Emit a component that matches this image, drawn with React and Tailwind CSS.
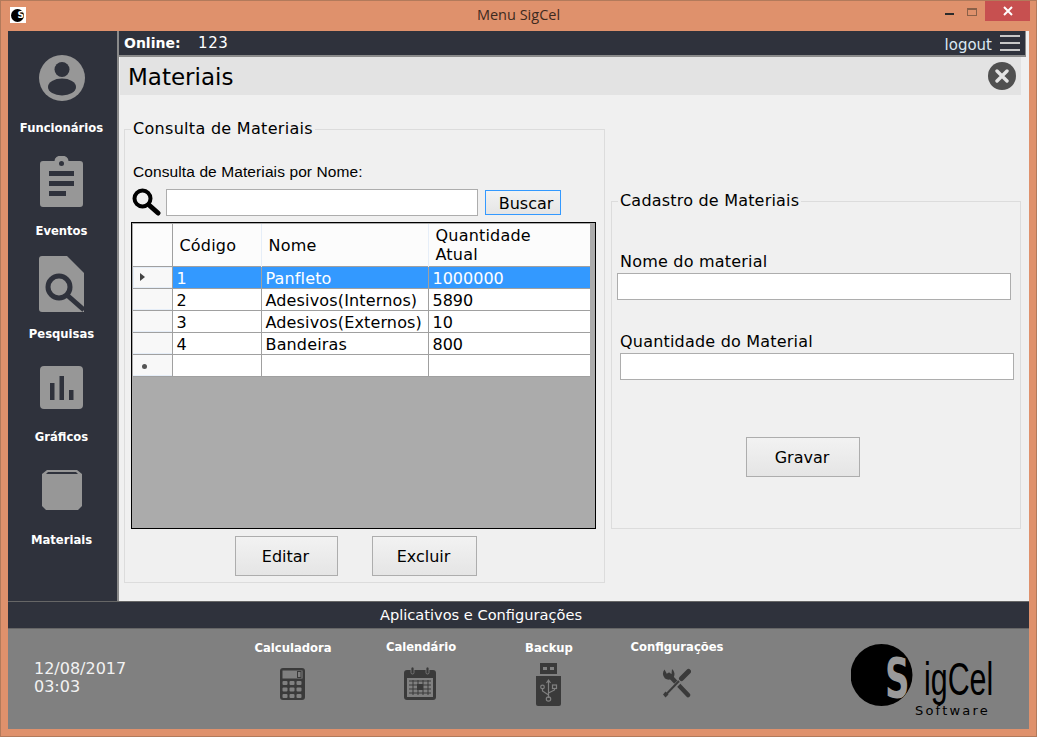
// App.jsx - Menu SigCel, tela de materiais
const VERDANA = "[font-family:'DejaVu_Sans',sans-serif]";

function PersonIcon() {
  return (
    <svg width="46" height="46" viewBox="0 0 46 46">
      <circle cx="23" cy="23" r="23" fill="#979797" />
      <circle cx="23" cy="14.5" r="7.5" fill="#2f323c" />
      <ellipse cx="23" cy="32" rx="14" ry="8.5" fill="#2f323c" />
    </svg>
  );
}

function ClipboardIcon() {
  return (
    <svg width="43" height="51" viewBox="0 0 43 51">
      <path d="M3 5h11.5a7 5.5 0 0 1 14 0H40a3 3 0 0 1 3 3v40a3 3 0 0 1-3 3H3a3 3 0 0 1-3-3V8a3 3 0 0 1 3-3z" fill="#979797" />
      <circle cx="21.5" cy="7.5" r="2.5" fill="#2f323c" />
      <rect x="9" y="15" width="25" height="5" fill="#2f323c" />
      <rect x="9" y="25" width="25" height="5" fill="#2f323c" />
      <rect x="9" y="35" width="17" height="5" fill="#2f323c" />
    </svg>
  );
}

function FileSearchIcon() {
  return (
    <svg width="45" height="56" viewBox="0 0 45 56">
      <path d="M3 0h25l17 17v39H3a3 3 0 0 1-3-3V3a3 3 0 0 1 3-3z" fill="#979797" />
      <circle cx="20" cy="31" r="11" fill="none" stroke="#2f323c" strokeWidth="5" />
      <path d="M28 39l17 15" stroke="#2f323c" strokeWidth="5" />
    </svg>
  );
}

function ChartIcon() {
  return (
    <svg width="43" height="43" viewBox="0 0 43 43">
      <rect width="43" height="43" rx="4" fill="#979797" />
      <rect x="10" y="17" width="4.5" height="17" fill="#2f323c" />
      <rect x="19.5" y="10" width="4.5" height="24" fill="#2f323c" />
      <rect x="29" y="24" width="4.5" height="10" fill="#2f323c" />
    </svg>
  );
}

function BoxIcon() {
  return (
    <svg width="40" height="40" viewBox="0 0 40 40">
      <path d="M5 0h30l5 4v32l-4 4H4l-4-4V4z" fill="#979797" />
      <path d="M4 4l2-2h28l2 2z" fill="#2f323c" />
    </svg>
  );
}

function CalculatorIcon() {
  const keys = [];
  for (let r = 0; r < 3; r++) {
    for (let c = 0; c < 3; c++) {
      keys.push(<rect key={`${r}-${c}`} x={2.5 + c * 7} y={13 + r * 6.5} width="5" height="4" rx="1" fill="#808080" />);
    }
  }
  return (
    <svg width="25" height="32" viewBox="0 0 25 32">
      <rect width="25" height="32" rx="3" fill="#3a3a3a" />
      <rect x="2.5" y="2.5" width="20" height="8" fill="#808080" />
      <rect x="17.5" y="3.5" width="3.5" height="6" fill="none" stroke="#3a3a3a" />
      {keys}
    </svg>
  );
}

function CalendarIcon() {
  return (
    <svg width="32" height="33" viewBox="0 0 32 33">
      <rect y="3" width="32" height="30" rx="3" fill="#3a3a3a" />
      <rect x="7" y="0" width="3" height="7" rx="1.5" fill="#3a3a3a" stroke="#808080" strokeWidth="0.8" />
      <rect x="22" y="0" width="3" height="7" rx="1.5" fill="#3a3a3a" stroke="#808080" strokeWidth="0.8" />
      <rect x="3" y="11" width="26" height="19" fill="#808080" />
      <path d="M5 14h22M5 18h22M5 22h22M5 26h22M9 13v15M14 13v15M19 13v15M24 13v15" stroke="#3a3a3a" strokeWidth="1" />
      <rect x="13" y="17" width="6" height="6" fill="#3a3a3a" />
    </svg>
  );
}

function UsbIcon() {
  return (
    <svg width="25" height="43" viewBox="0 0 25 43">
      <rect x="4" y="0" width="17" height="11" fill="#3a3a3a" />
      <rect x="7" y="4" width="4" height="3" fill="#808080" />
      <rect x="14" y="4" width="4" height="3" fill="#808080" />
      <path d="M0 13h25v28a2 2 0 0 1-2 2H2a2 2 0 0 1-2-2z" fill="#3a3a3a" />
      <path d="M12.5 18v17M12.5 32l-6-4v-3M12.5 30l6-3v-2M10.5 20l2-3 2 3" fill="none" stroke="#808080" strokeWidth="1.2" />
      <circle cx="12.5" cy="36" r="2.2" fill="none" stroke="#808080" strokeWidth="1.2" />
      <circle cx="6.5" cy="24" r="1.8" fill="none" stroke="#808080" strokeWidth="1.2" />
      <rect x="16.5" y="22" width="4" height="3.5" fill="none" stroke="#808080" strokeWidth="1.2" />
    </svg>
  );
}

function ToolsIcon() {
  return (
    <svg width="29" height="30" viewBox="0 0 29 30">
      <path d="M7 7l19 20" stroke="#3a3a3a" strokeWidth="4.5" strokeLinecap="round" />
      <path d="M2.5 1.5a6.5 6.5 0 0 0 .5 9a6.5 6.5 0 0 0 8.5-1a6.5 6.5 0 0 0-1.5-8.5l-.5 5-4 1z" fill="#3a3a3a" />
      <path d="M17 14L3.5 27.5" stroke="#808080" strokeWidth="4.5" />
      <path d="M26.5 3.5l-7 7" stroke="#3a3a3a" strokeWidth="5" strokeLinecap="round" />
      <path d="M17 13L3.5 27" stroke="#3a3a3a" strokeWidth="2" />
      <path d="M3.5 23.5l3 3-3 3-2.5-3z" fill="#3a3a3a" />
    </svg>
  );
}

function Logo() {
  return (
    <svg width="150" height="78" viewBox="0 0 150 78">
      <defs>
        <clipPath id="logo-circle">
          <circle cx="30.5" cy="32" r="31" />
        </clipPath>
      </defs>
      <circle cx="30.5" cy="32" r="31" fill="#000" />
      <g transform="translate(34 54) scale(0.62 1)">
        <text fontFamily="'DejaVu Sans'" fontWeight="bold" fontSize="55" fill="#000">S</text>
      </g>
      <g clipPath="url(#logo-circle)">
        <g transform="translate(34 54) scale(0.62 1)">
          <text fontFamily="'DejaVu Sans'" fontWeight="bold" fontSize="55" fill="#9a9a9a">S</text>
        </g>
      </g>
      <g transform="translate(73 52) scale(0.66 1)">
        <text fontFamily="'Liberation Sans'" fontSize="46" fill="#000">igCel</text>
      </g>
      <text x="64" y="72" fontFamily="'DejaVu Sans'" fontSize="13" fill="#000" letterSpacing="2.2">Software</text>
    </svg>
  );
}

const MENU = [
  { label: 'Funcionários', icon: <PersonIcon /> },
  { label: 'Eventos', icon: <ClipboardIcon /> },
  { label: 'Pesquisas', icon: <FileSearchIcon /> },
  { label: 'Gráficos', icon: <ChartIcon /> },
  { label: 'Materiais', icon: <BoxIcon /> },
];

const APPS = [
  { label: 'Calculadora', icon: <CalculatorIcon />, top: 'pt-[12px]', gap: 'h-[57px]' },
  { label: 'Calendário', icon: <CalendarIcon />, top: 'pt-[11px]', gap: 'h-[58px]' },
  { label: 'Backup', icon: <UsbIcon />, top: 'pt-[12px]', gap: 'h-[59px]' },
  { label: 'Configurações', icon: <ToolsIcon />, top: 'pt-[11px]', gap: 'h-[58px]' },
];

const ROWS = [
  ['1', 'Panfleto', '1000000'],
  ['2', 'Adesivos(Internos)', '5890'],
  ['3', 'Adesivos(Externos)', '10'],
  ['4', 'Bandeiras', '800'],
  ['', '', ''],
];

function Sidebar() {
  return (
    <aside className="w-[111px] shrink-0 bg-[#2f323c] border-r-2 border-[#8a8a8a] pt-px pr-[2px]">
      {MENU.map((item) => (
        <div key={item.label} className="h-[103px] flex flex-col items-center">
          <div className="h-[86px] mt-[3px] flex items-center justify-center">{item.icon}</div>
          <span className="h-[12px] mt-px leading-[12px] text-[11.6px] font-bold text-white whitespace-nowrap">{item.label}</span>
        </div>
      ))}
    </aside>
  );
}

function Grid() {
  return (
    <div className="mt-[6px] ml-[6px] w-[465px] h-[307px] border border-black bg-[#ababab] pl-px pt-px">
      <table className="table-fixed border-collapse w-[457px] text-[16px] text-black">
        <colgroup>
          <col className="w-[39px]" />
          <col className="w-[89px]" />
          <col className="w-[167px]" />
          <col className="w-[162px]" />
        </colgroup>
        <thead>
          <tr className="h-[42px] bg-[#fcfcfc] border-b border-[#a0a0a0] leading-[19px] tracking-[0.2px]">
            <th className="border-r border-[#a0a0a0]" />
            <th className="border-r border-[#e6eef8] pl-[7px] pt-[1px] text-left font-normal">Código</th>
            <th className="border-r border-[#e6eef8] pl-[7px] pt-[1px] text-left font-normal">Nome</th>
            <th className="pl-[7px] pt-[1px] text-left font-normal">Quantidade<br />Atual</th>
          </tr>
        </thead>
        <tbody>
          {ROWS.map((row, i) => (
            <tr key={i} className={`h-[22px] border-b border-[#a0a0a0] ${i === 0 ? 'bg-[#3399ff] text-white' : 'bg-white'}`}>
              <td className="bg-[#f8f8f8] border-r border-[#a0a0a0] p-0">
                <div className={`h-[21px] flex items-center pl-[6px] border-b border-[#e6eef8] ${i === 0 ? 'border-l border-t' : ''}`}>
                  {i === 0 && <span className="w-0 h-0 border-y-[4px] border-y-transparent border-l-[5px] border-l-[#444]" />}
                  {i === 4 && <span className="ml-[3px] mt-[3px] w-[5px] h-[5px] rounded-full bg-[#555]" />}
                </div>
              </td>
              {row.map((cell, j) => (
                <td key={j} className={`pl-[4px] pt-[2px] pb-0 leading-[19px] whitespace-nowrap overflow-hidden ${j < 2 ? 'border-r border-[#a0a0a0]' : ''} ${j === 1 ? 'tracking-[0.15px]' : ''}`}>{cell}</td>
              ))}
            </tr>
          ))}
        </tbody>
      </table>
    </div>
  );
}

function PlainButton({ className, children }) {
  return (
    <button type="button" className={`border border-[#adadad] bg-gradient-to-b from-[#f2f2f2] to-[#e5e5e5] text-[16px] text-black pt-[2px] pr-[2px] ${className}`}>
      {children}
    </button>
  );
}

function Consulta() {
  return (
    <fieldset className="w-[481px] h-[464px] ml-[5px] border border-[#dcdcdc]">
      <legend className="ml-[6px] px-[2px] h-[20px] leading-[20px] text-[16px] tracking-[0.3px] text-black">Consulta de Materiais</legend>
      <p className="mt-[23px] ml-[8px] h-[20px] leading-[20px] text-[15.5px] tracking-[0.1px] text-black [font-family:'Liberation_Sans',sans-serif]">Consulta de Materiais por Nome:</p>
      <div className="mt-[6px] ml-[7px] flex items-center">
        <svg width="29" height="28" viewBox="0 0 29 28" className="shrink-0">
          <circle cx="10.5" cy="10.5" r="8" fill="none" stroke="#000" strokeWidth="4" />
          <path d="M17 17l9 8" stroke="#000" strokeWidth="5" strokeLinecap="round" />
        </svg>
        <input className="ml-[5px] w-[312px] h-[27px] bg-white border border-[#adadad] outline-none" />
        <PlainButton className="ml-[7px] w-[76px] h-[25px] !border-[#3399ff] leading-[21px] pl-[8px]">Buscar</PlainButton>
      </div>
      <Grid />
      <div className="mt-[7px] ml-[110px] flex gap-[34px]">
        <PlainButton className="w-[103px] h-[40px]">Editar</PlainButton>
        <PlainButton className="w-[105px] h-[40px]">Excluir</PlainButton>
      </div>
    </fieldset>
  );
}

function Cadastro() {
  return (
    <fieldset className="mt-[72px] ml-[6px] w-[410px] h-[338px] border border-[#dcdcdc]">
      <legend className="ml-[6px] px-[2px] h-[20px] leading-[20px] text-[16px] tracking-[0.2px] text-black">Cadastro de Materiais</legend>
      <label className="block mt-[41px] ml-[8px] h-[20px] leading-[20px] text-[16px] tracking-[0.2px] text-black">Nome do material</label>
      <input className="block mt-[1px] ml-[5px] w-[394px] h-[27px] bg-white border border-[#adadad] outline-none" />
      <label className="block mt-[32px] ml-[8px] h-[20px] leading-[20px] text-[16px] tracking-[0.2px] text-black">Quantidade do Material</label>
      <input className="block mt-[1px] ml-[8px] w-[394px] h-[27px] bg-white border border-[#adadad] outline-none" />
      <PlainButton className="block mt-[57px] ml-[134px] w-[114px] h-[40px]">Gravar</PlainButton>
    </fieldset>
  );
}

function Main() {
  return (
    <main className="flex-1 flex flex-col bg-[#f0f0f0] min-w-0">
      <div className="h-[26px] mr-[3px] flex items-center bg-[#2f323c] border-b-2 border-r border-[#8a8a8a] text-white">
        <span className="ml-[5px] w-[74px] text-[14px] font-bold">Online:</span>
        <span className="text-[15px] tracking-[0.6px]">123</span>
        <span className="ml-auto mt-[4px] text-[15px] text-[#dbe8f2]">logout</span>
        <span className="ml-[8px] mr-[5px] w-[20px] flex flex-col gap-[5px]">
          <span className="h-[2px] bg-[#c8c8c8]" />
          <span className="h-[2px] bg-[#c8c8c8]" />
          <span className="h-[2px] bg-[#c8c8c8]" />
        </span>
      </div>
      <div className="h-[38px] ml-px mr-[8px] flex items-center justify-between bg-[#e3e3e3] pl-[8px] pr-[5px]">
        <h1 className="pt-[2px] text-[23px] font-normal text-black">Materiais</h1>
        <span className="w-[28px] h-[28px] rounded-full bg-[#505050] flex items-center justify-center">
          <svg width="14" height="14" viewBox="0 0 14 14">
            <path d="M2 2l10 10M12 2L2 12" stroke="#e3e3e3" strokeWidth="3.4" strokeLinecap="round" />
          </svg>
        </span>
      </div>
      <div className="flex-1 flex items-start pt-[24px]">
        <Consulta />
        <Cadastro />
      </div>
    </main>
  );
}

function Footer() {
  return (
    <footer className="shrink-0">
      <div className="h-[28px] flex items-center justify-center pr-[75px] bg-[#2f323c] border-t border-b border-[#666] text-[14.6px] text-white">
        Aplicativos e Configurações
      </div>
      <div className="h-[100px] flex bg-[#808080] text-white">
        <div className="w-[220px] pl-[26px] pt-[31px] text-[16px] leading-[18px] text-[#f2f2f2]">
          12/08/2017<br />03:03
        </div>
        {APPS.map((app) => (
          <div key={app.label} className={`w-[128px] flex flex-col items-center ${app.top}`}>
            <span className="h-[14px] ml-[2px] leading-[14px] text-[11.6px] font-bold whitespace-nowrap">{app.label}</span>
            <div className={`flex items-center justify-center ${app.gap}`}>{app.icon}</div>
          </div>
        ))}
        <div className="ml-[111px] pt-[14px]"><Logo /></div>
      </div>
    </footer>
  );
}

export default function App() {
  return (
    <div className={`w-[1037px] h-[737px] flex flex-col overflow-hidden bg-[#df916c] border border-[#b27a5b] ${VERDANA}`}>
      <header className="h-[30px] shrink-0 grid grid-cols-[1fr_auto_1fr] items-start">
        <span className="ml-[9px] mt-[6px] w-[16px] h-[16px] bg-white flex items-center pl-px">
          <span className="w-[13px] h-[13px] rounded-full bg-black text-white text-[9px] font-bold leading-[13px] text-right">S</span>
        </span>
        <span className="mt-[5px] text-[14.5px] leading-[18px] text-[#3d2a20] [font-family:'Open_Sans',sans-serif]">Menu SigCel</span>
        <div className="flex items-start justify-end">
          <span className="mt-[12px] w-[9px] h-[2px] bg-[#2b2b2b]" />
          <span className="ml-[13px] mt-[7px] w-[10px] h-[8px] border border-[#8a6048] border-t-2" />
          <span className="ml-[8px] mr-[6px] w-[45px] h-[20px] bg-[#c75050] flex items-center justify-center">
            <svg width="10" height="10" viewBox="0 0 10 10">
              <path d="M1 1l8 8M9 1L1 9" stroke="#fff" strokeWidth="2" />
            </svg>
          </span>
        </div>
      </header>
      <div className="mx-[7px] mb-[7px] flex-1 flex flex-col min-h-0">
        <div className="flex-1 flex min-h-0">
          <Sidebar />
          <Main />
        </div>
        <Footer />
      </div>
    </div>
  );
}
